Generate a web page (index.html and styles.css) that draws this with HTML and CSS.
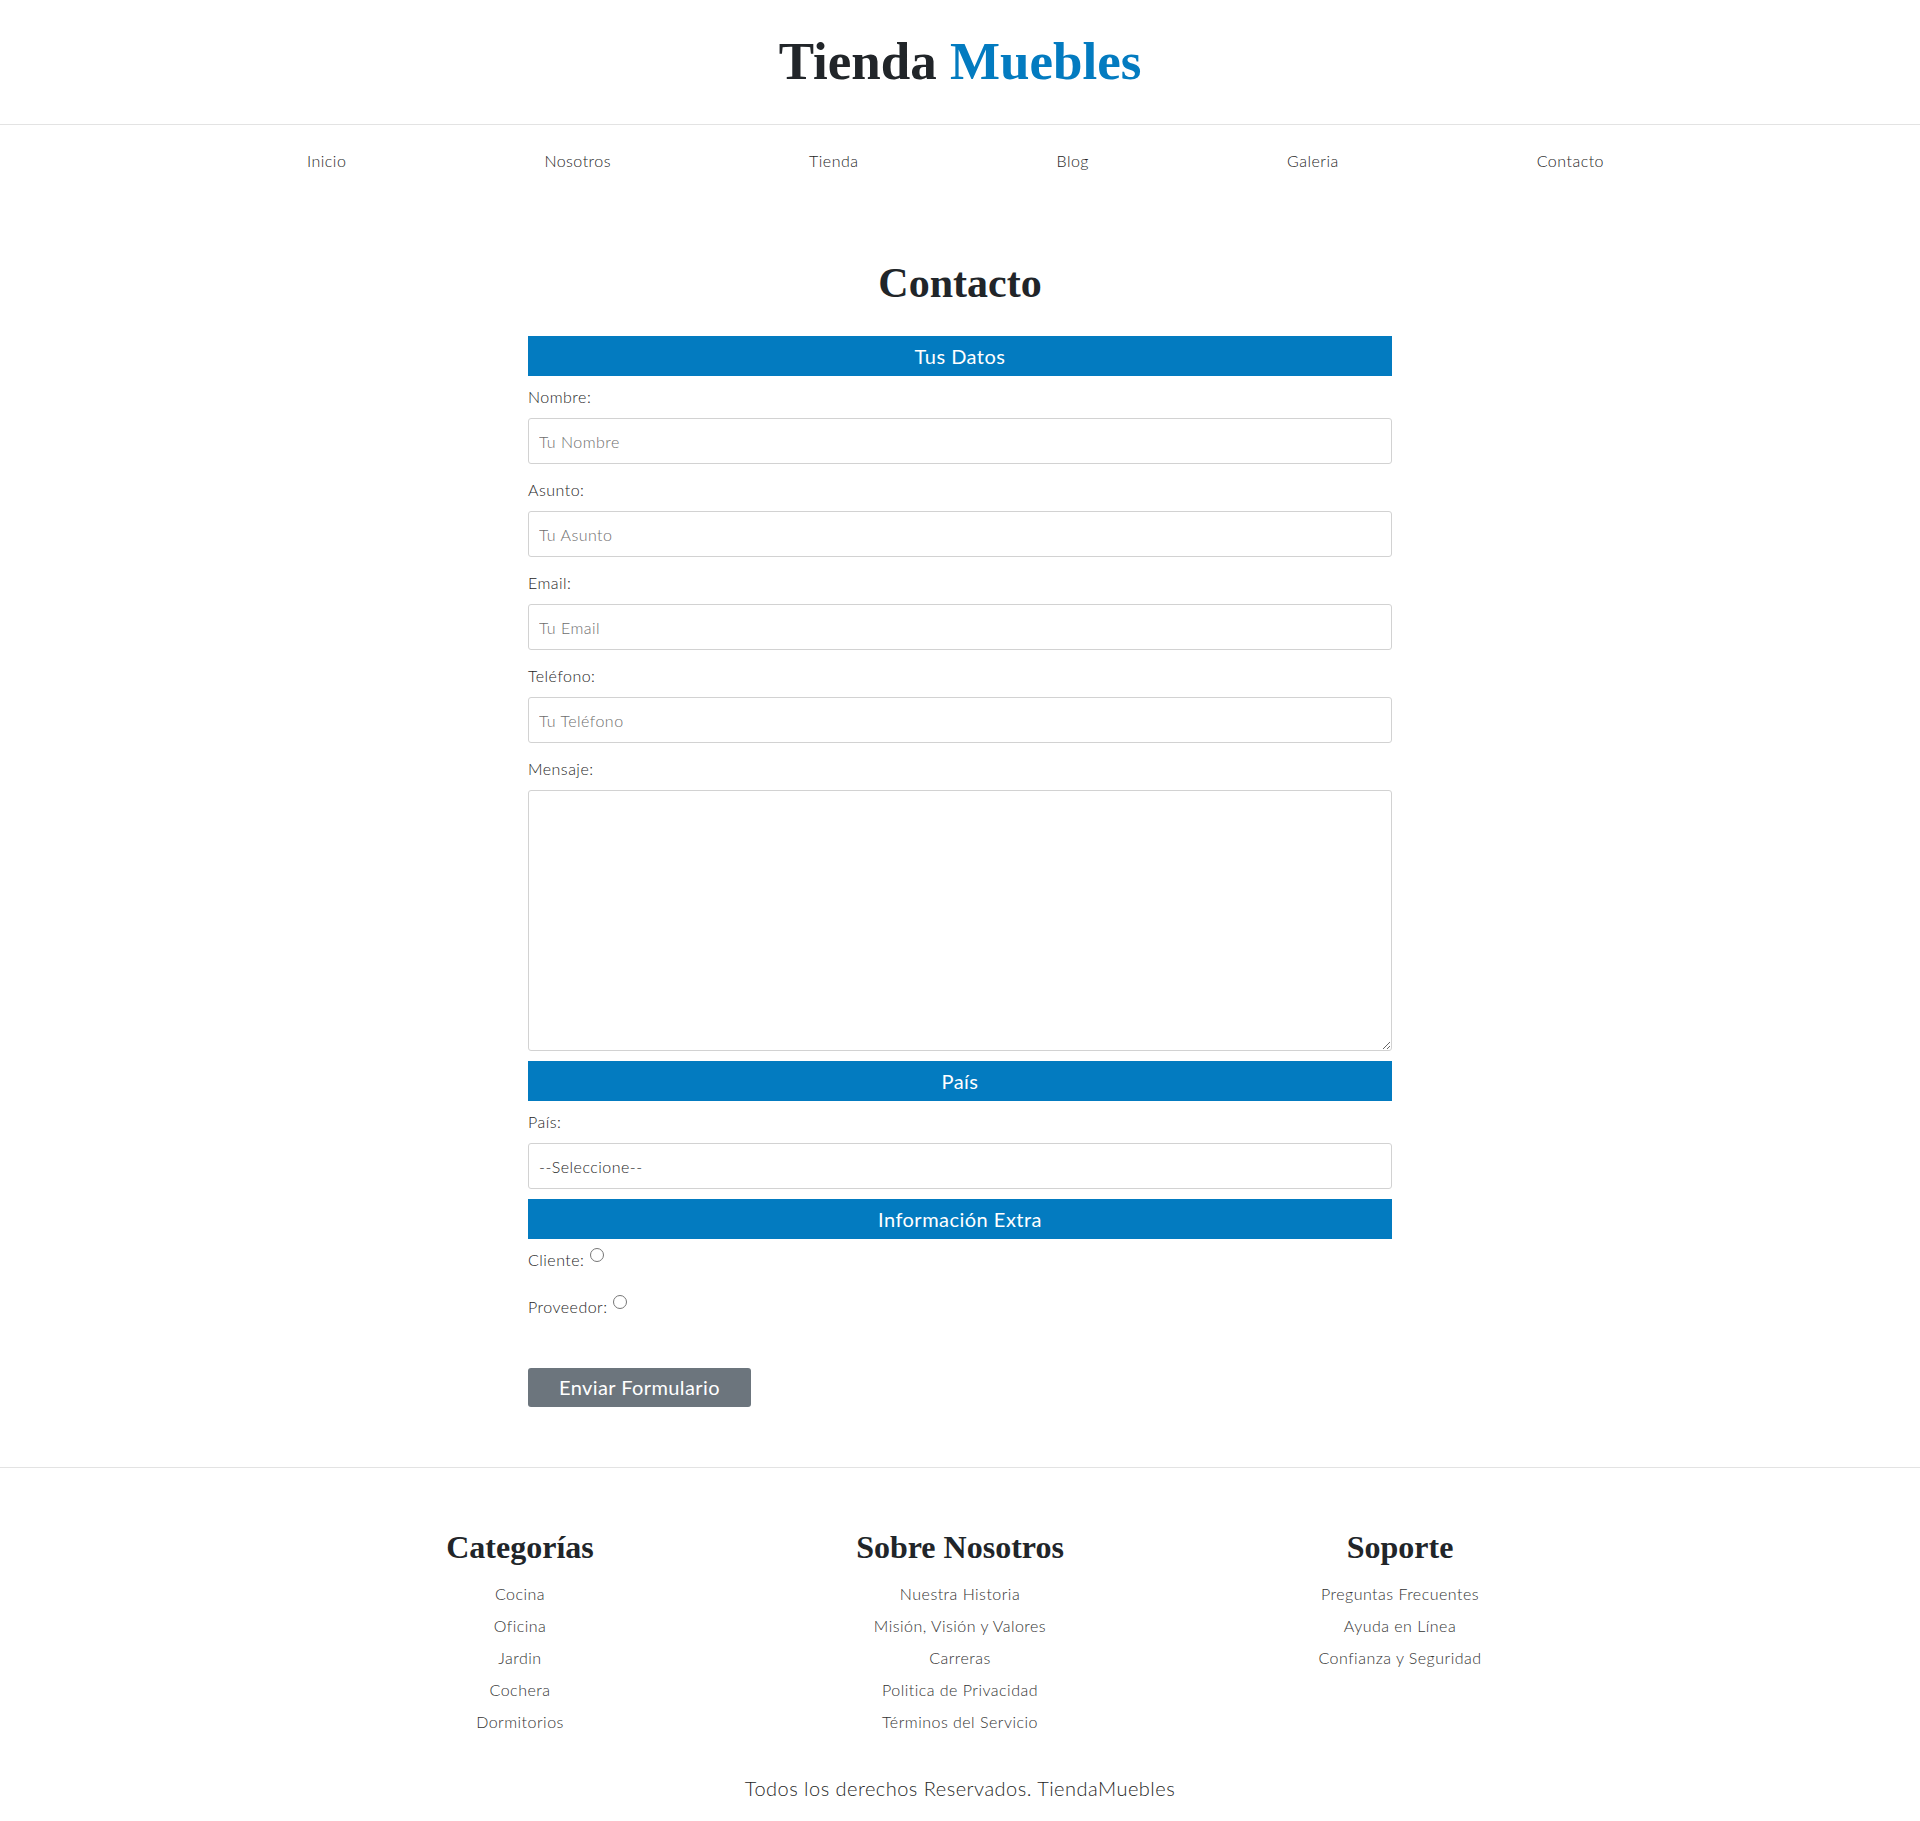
FILE: index.html
```html
<!DOCTYPE html>
<html lang="es">
<head>
<meta charset="utf-8">
<title>Tienda Muebles - Contacto</title>
<link rel="stylesheet" href="styles.css">
</head>
<body>
<header class="site-header">
  <h1 class="logo">Tienda <span class="logo-accent">Muebles</span></h1>
</header>

<nav class="main-nav">
  <div class="container nav-list">
    <a class="nav-link" href="#">Inicio</a>
    <a class="nav-link" href="#">Nosotros</a>
    <a class="nav-link" href="#">Tienda</a>
    <a class="nav-link" href="#">Blog</a>
    <a class="nav-link" href="#">Galeria</a>
    <a class="nav-link" href="#">Contacto</a>
  </div>
</nav>

<main class="contact">
  <h2 class="page-title">Contacto</h2>
  <form class="contact-form">
    <fieldset class="group">
      <legend class="group-title">Tus Datos</legend>
      <div class="field">
        <label class="field-label" for="nombre">Nombre:</label>
        <input class="field-input" id="nombre" type="text" placeholder="Tu Nombre">
      </div>
      <div class="field">
        <label class="field-label" for="asunto">Asunto:</label>
        <input class="field-input" id="asunto" type="text" placeholder="Tu Asunto">
      </div>
      <div class="field">
        <label class="field-label" for="email">Email:</label>
        <input class="field-input" id="email" type="email" placeholder="Tu Email">
      </div>
      <div class="field">
        <label class="field-label" for="telefono">Teléfono:</label>
        <input class="field-input" id="telefono" type="tel" placeholder="Tu Teléfono">
      </div>
      <div class="field">
        <label class="field-label" for="mensaje">Mensaje:</label>
        <textarea class="field-input field-textarea" id="mensaje"></textarea>
      </div>
    </fieldset>

    <fieldset class="group">
      <legend class="group-title">País</legend>
      <div class="field">
        <label class="field-label" for="pais">País:</label>
        <select class="field-input field-select" id="pais">
          <option>--Seleccione--</option>
        </select>
      </div>
    </fieldset>

    <fieldset class="group">
      <legend class="group-title">Información Extra</legend>
      <div class="radios">
        <div class="radio-row"><label for="cliente">Cliente:</label> <input class="radio" type="radio" id="cliente" name="tipo"></div>
        <div class="radio-row"><label for="proveedor">Proveedor:</label> <input class="radio" type="radio" id="proveedor" name="tipo"></div>
      </div>
    </fieldset>

    <button class="submit" type="submit">Enviar Formulario</button>
  </form>
</main>

<footer class="site-footer">
  <div class="container footer-cols">
    <section class="footer-col">
      <h3 class="footer-title">Categorías</h3>
      <ul class="footer-links">
        <li><a href="#">Cocina</a></li>
        <li><a href="#">Oficina</a></li>
        <li><a href="#">Jardin</a></li>
        <li><a href="#">Cochera</a></li>
        <li><a href="#">Dormitorios</a></li>
      </ul>
    </section>
    <section class="footer-col">
      <h3 class="footer-title">Sobre Nosotros</h3>
      <ul class="footer-links">
        <li><a href="#">Nuestra Historia</a></li>
        <li><a href="#">Misión, Visión y Valores</a></li>
        <li><a href="#">Carreras</a></li>
        <li><a href="#">Politica de Privacidad</a></li>
        <li><a href="#">Términos del Servicio</a></li>
      </ul>
    </section>
    <section class="footer-col">
      <h3 class="footer-title">Soporte</h3>
      <ul class="footer-links">
        <li><a href="#">Preguntas Frecuentes</a></li>
        <li><a href="#">Ayuda en Línea</a></li>
        <li><a href="#">Confianza y Seguridad</a></li>
      </ul>
    </section>
  </div>
  <p class="copyright">Todos los derechos Reservados. TiendaMuebles</p>
</footer>
</body>
</html>
```

FILE: styles.css
```css
* {
  box-sizing: border-box;
}

html, body {
  margin: 0;
  padding: 0;
}

body {
  background: #ffffff;
  color: #262626;
  font-family: Lato, "Open Sans", sans-serif;
  font-weight: 300;
  font-size: 16px;
  line-height: 24px;
  letter-spacing: 0.03em;
}

a {
  color: inherit;
  text-decoration: none;
}

.container {
  width: 1320px;
  margin: 0 auto;
  padding: 0 12px;
}

/* Header */
.site-header {
  padding: 29px 0 31px;
  border-bottom: 1px solid #e3e3e3;
  text-align: center;
}

.logo {
  margin: 0;
  font-family: "Liberation Serif", "Times New Roman", serif;
  font-weight: 700;
  font-size: 53px;
  line-height: 64px;
  letter-spacing: 0;
  color: #212529;
}

.logo-accent {
  color: #037bc0;
}

/* Nav */
.main-nav {
  padding-top: 24px;
}

.nav-list {
  display: flex;
  justify-content: space-between;
  padding: 0 16px 0 7px;
}

.nav-link {
  font-size: 16px;
  line-height: 24px;
  color: #262626;
}

/* Main */
.contact {
  padding: 85px 0 60px;
}

.page-title {
  margin: 0 0 28px;
  text-align: center;
  font-family: "Liberation Serif", "Times New Roman", serif;
  font-weight: 700;
  font-size: 42px;
  line-height: 50px;
  letter-spacing: 0;
  color: #212529;
}

.contact-form {
  width: 864px;
  margin: 0 auto;
}

.group {
  border: 0;
  margin: 0;
  padding: 0;
  min-width: 0;
}

.group + .group {
  margin-top: 10px;
}

.group-title {
  display: block;
  float: left;
  width: 100%;
  height: 40px;
  padding: 0;
  margin: 0 0 9px;
  background: #037bc0;
  color: #ffffff;
  text-align: center;
  font-size: 20px;
  font-weight: 400;
  line-height: 40px;
}

.group-title + * {
  clear: both;
}

.field + .field {
  margin-top: 14px;
}

.field-label {
  display: block;
  font-size: 16px;
  line-height: 24px;
  color: #262626;
}

.field-input {
  display: block;
  width: 100%;
  height: 46px;
  margin-top: 9px;
  padding: 0 10px;
  border: 1px solid #d2d2d2;
  border-radius: 3px;
  background: #ffffff;
  font-family: Lato, "Open Sans", sans-serif;
  font-weight: 300;
  font-size: 16px;
  letter-spacing: 0.03em;
  color: #262626;
}

.field-input::placeholder {
  color: #6e6e6e;
}

.field-textarea {
  height: 261px;
  padding: 10px;
}

.field-select {
  appearance: none;
  -webkit-appearance: none;
  color: #262626;
}

.radio-row {
  font-size: 16px;
  line-height: 24px;
  color: #262626;
}

.radio-row + .radio-row {
  margin-top: 23px;
}

.radio {
  width: 14px;
  height: 14px;
  margin: 0 3px 0 1px;
  vertical-align: top;
}

.submit {
  display: block;
  width: 223px;
  height: 39px;
  margin-top: 49px;
  padding: 0;
  border: 0;
  border-radius: 3px;
  background: #6c757d;
  color: #ffffff;
  font-family: Lato, "Open Sans", sans-serif;
  font-weight: 400;
  font-size: 20px;
  letter-spacing: 0.02em;
  line-height: 39px;
  text-align: center;
}

/* Footer */
.site-footer {
  border-top: 1px solid #e3e3e3;
  padding: 60px 0 18px;
}

.footer-cols {
  display: grid;
  grid-template-columns: repeat(3, 1fr);
  padding: 0;
}

.footer-col {
  text-align: center;
}

.footer-title {
  margin: 0 0 12px;
  font-family: "Liberation Serif", "Times New Roman", serif;
  font-weight: 700;
  font-size: 32px;
  line-height: 38px;
  letter-spacing: 0;
  color: #212529;
}

.footer-links {
  list-style: none;
  margin: 0;
  padding: 0;
}

.footer-links li {
  font-size: 16px;
  line-height: 32px;
  color: #333333;
}

.copyright {
  margin: 35px 0 0;
  text-align: center;
  font-size: 20px;
  line-height: 30px;
  color: #262626;
}
```
